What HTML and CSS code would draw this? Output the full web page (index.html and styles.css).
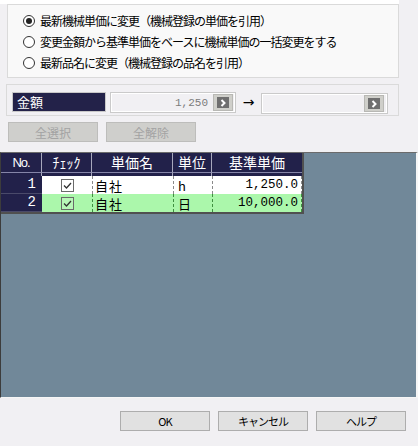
FILE: index.html
```html
<!DOCTYPE html>
<html>
<head>
<meta charset="utf-8" />
<link rel="stylesheet" href="styles.css">
<title>単価変更</title>
</head>
<body>

<div class="topStrip"></div>

<div class="radioPanel">
  <div class="radioRow"><span class="radio checked"></span>最新機械単価に変更（機械登録の単価を引用）</div>
  <div class="radioRow"><span class="radio"></span>変更金額から基準単価をベースに機械単価の一括変更をする</div>
  <div class="radioRow"><span class="radio"></span>最新品名に変更（機械登録の品名を引用）</div>
</div>

<div class="amountPanel">
  <div class="amountLabel">金額</div>
  <div class="amountInput">
    <span class="amountValue">1,250</span>
    <span class="pickBtn"><span class="pickInner"><svg width="8" height="8" viewBox="0 0 8 8"><polyline points="2.5,1 5.5,4 2.5,7" fill="none" stroke="#fff" stroke-width="2"/></svg></span></span>
  </div>
  <div class="arrow">→</div>
  <div class="amountInput target">
    <span class="amountValue"></span>
    <span class="pickBtn"><span class="pickInner"><svg width="8" height="8" viewBox="0 0 8 8"><polyline points="2.5,1 5.5,4 2.5,7" fill="none" stroke="#fff" stroke-width="2"/></svg></span></span>
  </div>
</div>

<div class="selectButtons">
  <button class="smallBtn" disabled>全選択</button>
  <button class="smallBtn" disabled>全解除</button>
</div>

<div class="gridArea">
  <div class="gridFrame">
  <table class="grid">
    <tr class="headRow">
      <th class="colNo">No.</th>
      <th class="colCheck">ﾁｪｯｸ</th>
      <th class="colName">単価名</th>
      <th class="colUnit">単位</th>
      <th class="colPrice">基準単価</th>
    </tr>
    <tr class="sepRow">
      <td></td><td></td><td></td><td></td><td></td>
    </tr>
    <tr class="dataRow">
      <td class="noCell">1</td>
      <td class="checkCell"><svg width="13" height="13" viewBox="0 0 13 13"><rect x="0.5" y="0.5" width="12" height="12" fill="#fff" stroke="#6a6a6a"/><polyline points="3,6.5 5.5,9 10,4" fill="none" stroke="#333" stroke-width="1.3"/></svg></td>
      <td class="nameCell">自社</td>
      <td class="unitCell">h</td>
      <td class="priceCell">1,250.0</td>
    </tr>
    <tr class="dataRow selected">
      <td class="noCell">2</td>
      <td class="checkCell"><svg width="13" height="13" viewBox="0 0 13 13"><rect x="0.5" y="0.5" width="12" height="12" fill="#b8f7b8" stroke="#6a6a6a"/><polyline points="3,6.5 5.5,9 10,4" fill="none" stroke="#333" stroke-width="1.3"/></svg></td>
      <td class="nameCell">自社</td>
      <td class="unitCell">日</td>
      <td class="priceCell">10,000.0</td>
    </tr>
  </table>
  </div>
</div>

<div class="footer">
  <button class="dlgBtn">OK</button>
  <button class="dlgBtn">キャンセル</button>
  <button class="dlgBtn">ヘルプ</button>
</div>

</body>
</html>
```

FILE: styles.css
```css
*
{
	box-sizing: border-box;
}

body
{
	margin: 0;
	width: 418px;
	height: 446px;
	overflow: hidden;
	background-color: #f1f0f3;
	font-family: "Noto Sans CJK JP", sans-serif;
	font-size: 12px;
	color: #000;
}

.topStrip
{
	width: 399px;
	height: 4px;
	background-color: #fff;
}

/* radio group */
.radioPanel
{
	margin-left: 7px;
	width: 392px;
	height: 74px;
	border: 1px solid #dadada;
	background-color: #f9f9f9;
	padding: 5px 0 0 15px;
}

.radioRow
{
	display: flex;
	align-items: center;
	height: 21px;
	letter-spacing: -1px;
	white-space: nowrap;
}

.radio
{
	width: 12px;
	height: 12px;
	border: 1px solid #333;
	border-radius: 50%;
	background-color: #fff;
	margin-right: 5px;
	display: flex;
	align-items: center;
	justify-content: center;
	flex-shrink: 0;
}

.radio.checked::after
{
	content: "";
	width: 6px;
	height: 6px;
	border-radius: 50%;
	background-color: #222;
}

/* amount */
.amountPanel
{
	margin-top: 6px;
	margin-left: 6px;
	width: 393px;
	height: 32px;
	border: 1px solid #dadada;
	padding: 7px 0 0 5px;
	display: flex;
	align-items: flex-start;
}

.amountLabel
{
	width: 94px;
	height: 20px;
	background-color: #232249;
	border: 1px solid #c8c8c8;
	color: #fff;
	font-size: 13px;
	line-height: 18px;
	padding-left: 4px;
}

.amountInput
{
	margin-left: 4px;
	width: 126px;
	height: 21px;
	border: 1px solid #cacaca;
	box-shadow: inset 0 0 0 1px #fff;
	display: flex;
	align-items: center;
	justify-content: flex-end;
	padding-right: 2px;
}

.amountInput.target
{
	margin-left: 0;
	margin-top: 1px;
	width: 127px;
	padding-right: 3px;
}

.amountValue
{
	font-family: "Liberation Mono", monospace;
	font-size: 11px;
	color: #7c7c7c;
	margin-right: 5px;
}

.pickBtn
{
	width: 20px;
	height: 17px;
	background-color: #cfcfca;
	border: 1px solid #b8b8b4;
	display: flex;
	align-items: center;
	justify-content: center;
}

.pickInner
{
	width: 12px;
	height: 11px;
	background-color: #6f6f6f;
	display: flex;
	align-items: center;
	justify-content: center;
}

.arrow
{
	width: 25px;
	text-align: center;
	font-family: "DejaVu Sans", sans-serif;
	font-size: 14px;
	line-height: 21px;
}

/* select buttons */
.selectButtons
{
	margin-top: 6px;
	margin-left: 8px;
	display: flex;
	gap: 8px;
}

.smallBtn
{
	width: 90px;
	height: 20px;
	padding: 0;
	background-color: #cfcfcc;
	border: 1px solid #bdbdbb;
	color: #a3a3a3;
	font-family: "Noto Sans CJK JP", sans-serif;
	font-size: 12px;
}

/* grid */
.gridArea
{
	margin-top: 10px;
	width: 418px;
	height: 246px;
	background-color: #718899;
	border-top: 1px solid #6b6b6b;
	border-left: 1px solid #3c3c3c;
	border-right: 2px solid #f6f6f6;
	border-bottom: 1px solid #f6f6f6;
}

.gridFrame
{
	display: inline-block;
	border-right: 2px solid #505050;
	border-bottom: 2px solid #505050;
}

.grid
{
	border-collapse: separate;
	border-spacing: 0;
	table-layout: fixed;
	width: 301px;
}

.colNo { width: 41px; }
.colCheck { width: 50px; }
.colName { width: 81px; }
.colUnit { width: 39px; }
.colPrice { width: 90px; }

.headRow th
{
	height: 19px;
	padding: 0;
	background-color: #22214a;
	color: #fff;
	font-weight: normal;
	font-size: 14px;
	line-height: 19px;
	border-right: 1px solid #a7a7bc;
	white-space: nowrap;
}

.headRow th.colNo
{
	font-family: "Liberation Sans", sans-serif;
	font-size: 13px;
	letter-spacing: -1px;
}

.headRow th:last-child,
.sepRow td:last-child
{
	border-right: none;
}

.sepRow td
{
	height: 4px;
	padding: 0;
	background-color: #22214a;
	border-top: 1px solid #8585a8;
	border-right: 1px solid #a7a7bc;
}

.dataRow td
{
	height: 18px;
	padding: 0;
	background-color: #fff;
	border-left: 1px dashed #8a8a8a;
	font-size: 13px;
	line-height: 17px;
	white-space: nowrap;
}

.dataRow.selected td
{
	background-color: #abf7ab;
	border-left-color: #3f8f3f;
}

.dataRow td.noCell
{
	background-color: #22214a;
	color: #fff;
	text-align: right;
	padding-right: 6px;
	border-left: none;
	border-bottom: 1px solid #4a4a6a;
	font-family: "Liberation Mono", monospace;
	font-size: 14px;
}

.dataRow td.checkCell
{
	border-left: none;
	text-align: center;
	line-height: 0;
	vertical-align: middle;
}

.dataRow td.nameCell
{
	padding-left: 2px;
	letter-spacing: 1px;
}

.dataRow td.unitCell
{
	padding-left: 4px;
}

.dataRow td.priceCell
{
	text-align: right;
	padding-right: 3px;
	font-family: "Liberation Mono", monospace;
	font-size: 12.5px;
	border-right: 1px dashed #8a8a8a;
}

.dataRow.selected td.priceCell
{
	border-right-color: #3f8f3f;
}

/* dialog buttons */
.footer
{
	margin-top: 13px;
	padding-right: 12px;
	display: flex;
	justify-content: flex-end;
	gap: 8px;
}

.dlgBtn
{
	width: 90px;
	height: 20px;
	padding: 0;
	background-color: #e1e1e1;
	border: 1px solid #adadad;
	font-family: "Noto Sans CJK JP", sans-serif;
	font-size: 11px;
	letter-spacing: -1px;
	color: #000;
}
```
